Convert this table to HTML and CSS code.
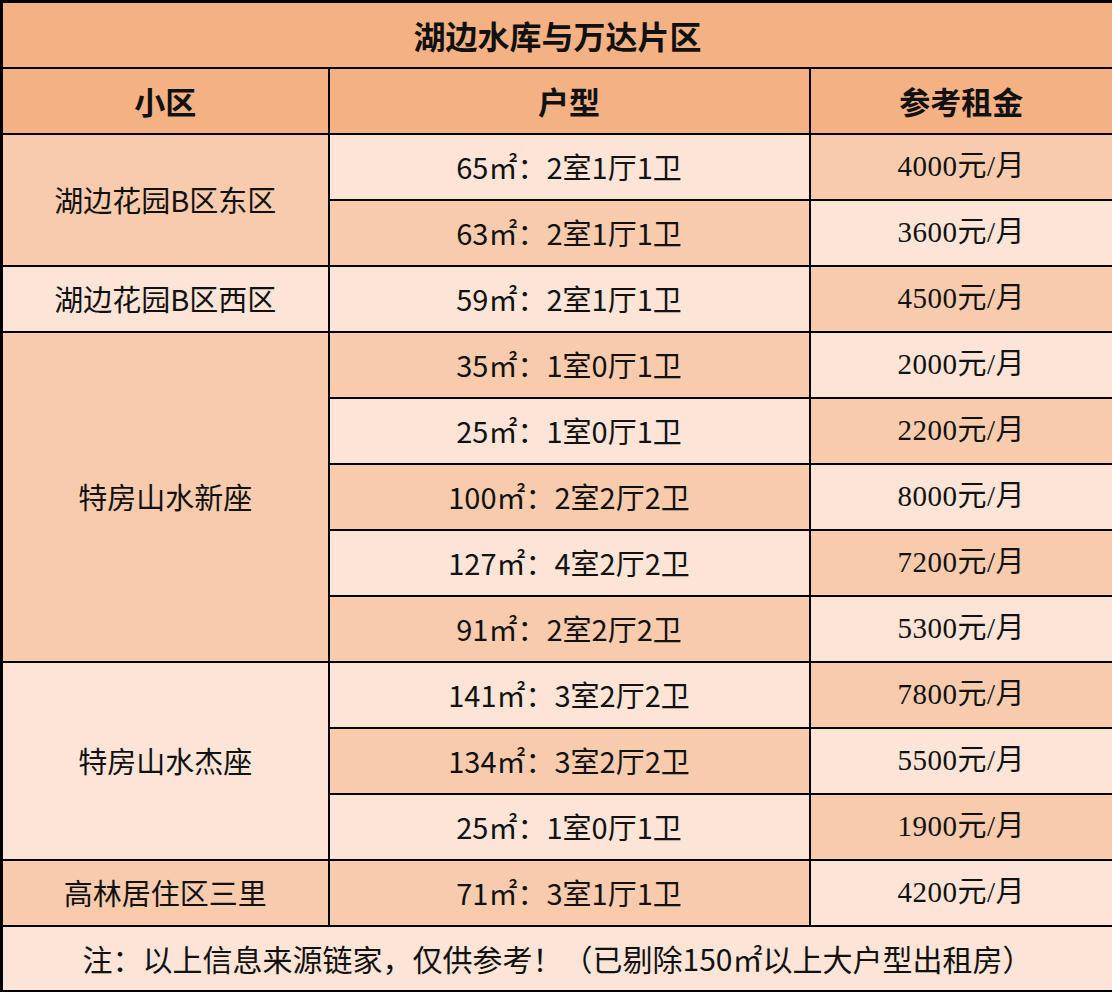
FILE: index.html
```html
<!DOCTYPE html>
<html lang="zh-CN">
<head>
<meta charset="utf-8">
<title>湖边水库与万达片区</title>
<link rel="stylesheet" href="styles.css">
</head>
<body>
<table class="rent">
  <colgroup>
    <col class="c-area">
    <col class="c-type">
    <col class="c-price">
  </colgroup>
  <thead>
    <tr class="title-row"><th colspan="3">湖边水库与万达片区</th></tr>
    <tr class="head-row"><th>小区</th><th>户型</th><th>参考租金</th></tr>
  </thead>
  <tbody>
    <tr><td class="area dark" rowspan="2">湖边花园B区东区</td><td class="type light">65㎡：2室1厅1卫</td><td class="price dark">4000元/月</td></tr>
    <tr><td class="type dark">63㎡：2室1厅1卫</td><td class="price light">3600元/月</td></tr>
    <tr><td class="area light">湖边花园B区西区</td><td class="type light">59㎡：2室1厅1卫</td><td class="price dark">4500元/月</td></tr>
    <tr><td class="area dark" rowspan="5">特房山水新座</td><td class="type dark">35㎡：1室0厅1卫</td><td class="price light">2000元/月</td></tr>
    <tr><td class="type light">25㎡：1室0厅1卫</td><td class="price dark">2200元/月</td></tr>
    <tr><td class="type dark">100㎡：2室2厅2卫</td><td class="price light">8000元/月</td></tr>
    <tr><td class="type light">127㎡：4室2厅2卫</td><td class="price dark">7200元/月</td></tr>
    <tr><td class="type dark">91㎡：2室2厅2卫</td><td class="price light">5300元/月</td></tr>
    <tr><td class="area light" rowspan="3">特房山水杰座</td><td class="type light">141㎡：3室2厅2卫</td><td class="price dark">7800元/月</td></tr>
    <tr><td class="type dark">134㎡：3室2厅2卫</td><td class="price light">5500元/月</td></tr>
    <tr><td class="type light">25㎡：1室0厅1卫</td><td class="price dark">1900元/月</td></tr>
    <tr><td class="area dark">高林居住区三里</td><td class="type dark">71㎡：3室1厅1卫</td><td class="price light">4200元/月</td></tr>
  </tbody>
  <tfoot>
    <tr class="note-row"><td colspan="3">注：以上信息来源链家，仅供参考！（已剔除150㎡以上大户型出租房）</td></tr>
  </tfoot>
</table>
</body>
</html>
```
FILE: styles.css
```css
html, body {
  margin: 0;
  padding: 0;
  background: #fce4d6;
}

.rent {
  width: 1112px;
  border-collapse: collapse;
  table-layout: fixed;
  border: 3px solid #000;
  font-family: "Noto Sans CJK SC", "Noto Sans", sans-serif;
  color: #111;
}

.c-area { width: 327px; }
.c-type { width: 481px; }
.c-price { width: 304px; }

.rent th,
.rent td {
  border: 2px solid #000;
  padding: 0;
  text-align: center;
  vertical-align: middle;
  line-height: 1;
}

.rent tr { height: 66px; }

.title-row th,
.head-row th {
  background: #f4b183;
  font-size: 32px;
  font-weight: 700;
}

.head-row th { font-size: 31px; }

.rent td { font-size: 29px; }

.area { font-size: 30px; }

.price {
  font-family: "Liberation Serif", "Noto Sans CJK SC", serif;
  font-size: 31px;
  letter-spacing: 0.5px;
}

.dark { background: #f8cbad; }
.light { background: #fce4d6; }

.note-row td {
  background: #fce4d6;
  font-size: 30px;
}
.note-row { height: 67px; }
```
